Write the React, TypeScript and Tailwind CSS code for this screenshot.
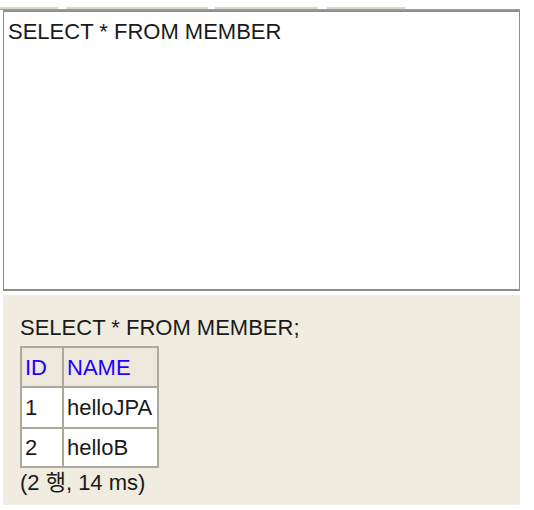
import React from "react";

export default function App() {
  const font = { fontFamily: '"Liberation Sans", Arial, "Noto Sans CJK KR", sans-serif' };
  return (
    <div className="w-[534px] h-[510px] bg-white relative overflow-hidden" style={font}>
      {/* cut-off tabs */}
      <div className="h-[10px] flex items-end gap-0 relative">
        <div className="absolute left-0 right-[14px] bottom-0 h-[1px] bg-[#a0a0a0]" />
        <div className="w-[58px] h-[3px] bg-[#dcd8c4] border-b border-[#9c9a90]" />
        <div className="w-[8px]" />
        <div className="w-[142px] h-[3px] bg-[#dcd8c4] border-b border-[#9c9a90]" />
        <div className="w-[7px]" />
        <div className="w-[103px] h-[3px] bg-[#dcd8c4] border-b border-[#9c9a90]" />
        <div className="w-[9px]" />
        <div className="w-[78px] h-[3px] bg-[#dcd8c4] border-b border-[#9c9a90]" />
      </div>
      {/* editor */}
      <div className="ml-[3px] w-[517px] h-[281px] border border-[#8f8f8f] border-t-2 border-b-2 border-t-[#909090] border-b-[#8c8c8c] bg-white px-[4px] pt-[7px]">
        <div className="text-[22px] leading-[26px] text-[#1a1a1a]">SELECT * FROM MEMBER</div>
      </div>
      {/* results */}
      <div className="ml-[3px] mt-[4px] w-[517px] h-[210px] bg-[#f0ede0] pl-[17px] pt-[20px] text-[#1a1a1a]">
        <div className="text-[22px] leading-[26px]">SELECT * FROM MEMBER;</div>
        <table className="mt-[5px] border-collapse border-2 border-[#aca99c] text-[22px] leading-[25px]">
          <tbody>
            <tr className="h-[40px] bg-[#ece9dc]">
              <th className="w-[42px] border-2 border-[#aca99c] text-left font-normal pl-[3px] text-[#1f00ff]">ID</th>
              <th className="w-[95px] border-2 border-[#aca99c] text-left font-normal pl-[3px] pr-[1px] text-[#1f00ff]">NAME</th>
            </tr>
            <tr className="h-[41px] bg-white">
              <td className="border-2 border-[#aca99c] pl-[3px]">1</td>
              <td className="border-2 border-[#aca99c] pl-[3px] pr-[1px]">helloJPA</td>
            </tr>
            <tr className="h-[39px] bg-white">
              <td className="border-2 border-[#aca99c] pl-[3px]">2</td>
              <td className="border-2 border-[#aca99c] pl-[3px] pr-[1px]">helloB</td>
            </tr>
          </tbody>
        </table>
        <div className="text-[22px] leading-[26px] mt-[2px]">(2 행, 14 ms)</div>
      </div>
    </div>
  );
}
